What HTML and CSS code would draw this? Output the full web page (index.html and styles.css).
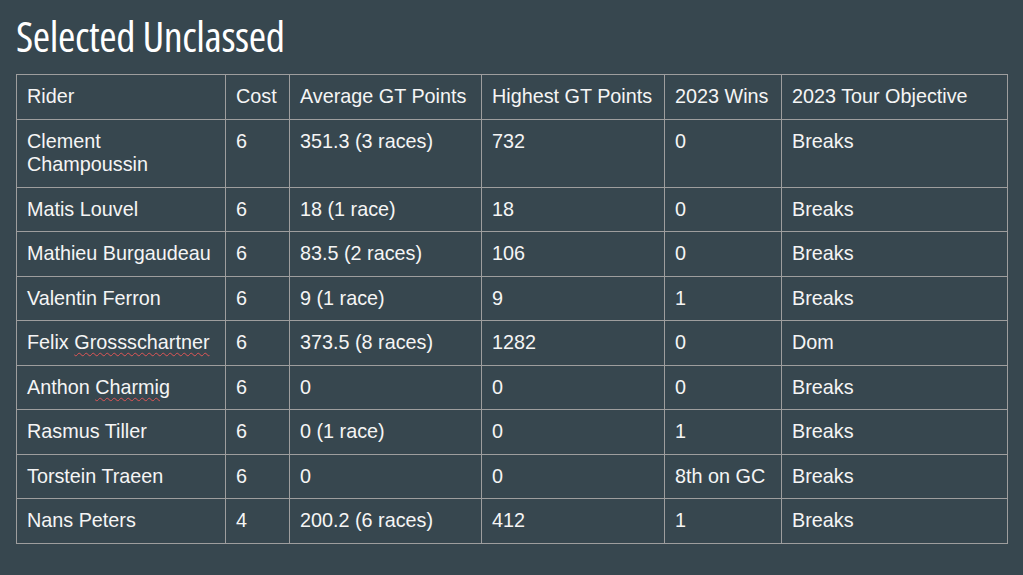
FILE: index.html
```html
<!DOCTYPE html>
<html>
<head>
<meta charset="utf-8">
<link rel="stylesheet" href="styles.css">
</head>
<body>
<div class="slide">
  <h1 class="title"><span class="title-text">Selected Unclassed</span></h1>
  <table class="grid">
    <colgroup>
      <col class="c1"><col class="c2"><col class="c3"><col class="c4"><col class="c5"><col class="c6">
    </colgroup>
    <tr><td>Rider</td><td>Cost</td><td>Average GT Points</td><td>Highest GT Points</td><td>2023 Wins</td><td>2023 Tour Objective</td></tr>
    <tr><td>Clement Champoussin</td><td>6</td><td>351.3 (3 races)</td><td>732</td><td>0</td><td>Breaks</td></tr>
    <tr><td>Matis Louvel</td><td>6</td><td>18 (1 race)</td><td>18</td><td>0</td><td>Breaks</td></tr>
    <tr><td>Mathieu Burgaudeau</td><td>6</td><td>83.5 (2 races)</td><td>106</td><td>0</td><td>Breaks</td></tr>
    <tr><td>Valentin Ferron</td><td>6</td><td>9 (1 race)</td><td>9</td><td>1</td><td>Breaks</td></tr>
    <tr><td>Felix <span class="sp">Grossschartner</span></td><td>6</td><td>373.5 (8 races)</td><td>1282</td><td>0</td><td>Dom</td></tr>
    <tr><td>Anthon <span class="sp">Charmig</span></td><td>6</td><td>0</td><td>0</td><td>0</td><td>Breaks</td></tr>
    <tr><td>Rasmus Tiller</td><td>6</td><td>0 (1 race)</td><td>0</td><td>1</td><td>Breaks</td></tr>
    <tr><td>Torstein Traeen</td><td>6</td><td>0</td><td>0</td><td>8th on GC</td><td>Breaks</td></tr>
    <tr><td>Nans Peters</td><td>4</td><td>200.2 (6 races)</td><td>412</td><td>1</td><td>Breaks</td></tr>
  </table>
</div>
</body>
</html>
```
FILE: styles.css
```css
html, body {
  margin: 0;
  padding: 0;
  background: #37474f;
}
.slide {
  width: 1023px;
  height: 575px;
  padding: 13px 0 0 16px;
  box-sizing: border-box;
  color: #f5f5f5;
  font-family: "Liberation Sans", Arial, sans-serif;
}
.title {
  margin: 0 0 15px 0;
  font-family: "Open Sans", sans-serif;
  font-stretch: 75%;
  font-weight: 500;
  font-size: 42px;
  line-height: 46px;
  letter-spacing: -0.4px;
  color: #ffffff;
}
.title-text {
  display: inline-block;
}
.grid {
  border-collapse: collapse;
  table-layout: fixed;
  width: 992px;
}
.grid td {
  border: 1px solid #9e9e9e;
  padding: 10px 10px 10px 10px;
  font-size: 19.8px;
  line-height: 23.5px;
  vertical-align: top;
}
.c1 { width: 209px; }
.c2 { width: 64px; }
.c3 { width: 192px; }
.c4 { width: 183px; }
.c5 { width: 117px; }
.c6 { width: 226px; }
.sp {
  text-decoration: underline wavy #e05555;
  text-decoration-thickness: 1px;
  text-underline-offset: 3px;
}
```
